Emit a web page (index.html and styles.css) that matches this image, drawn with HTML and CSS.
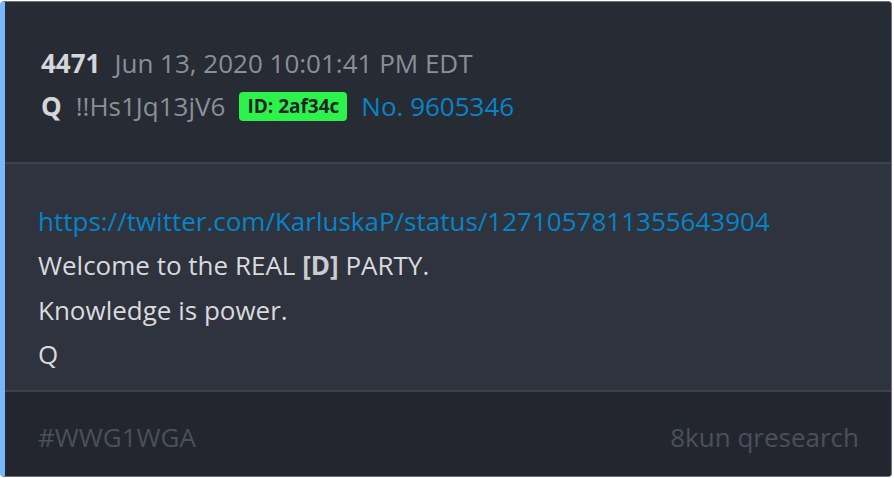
FILE: index.html
```html
<!DOCTYPE html>
<html lang="en">
<head>
    <meta charset="UTF-8">
    <title>Q Drop 4471</title>
    <link rel="stylesheet" href="styles.css">
</head>
<body>
    <div class="post-card">
        <div class="post-header">
            <div class="meta-line">
                <span class="post-num">4471</span>
                <span class="post-date">Jun 13, 2020 10:01:41 PM EDT</span>
            </div>
            <div class="meta-line">
                <span class="author">Q</span>
                <span class="trip">!!Hs1Jq13jV6</span>
                <span class="id-badge">ID: 2af34c</span>
                <a class="post-link" href="#">No. 9605346</a>
            </div>
        </div>
        <div class="post-body">
            <p><a href="#">https://twitter.com/KarluskaP/status/1271057811355643904</a></p>
            <p>Welcome to the REAL <strong>[D]</strong> PARTY.</p>
            <p>Knowledge is power.</p>
            <p>Q</p>
        </div>
        <div class="post-footer">
            <span>#WWG1WGA</span>
            <span>8kun qresearch</span>
        </div>
    </div>
</body>
</html>
```

FILE: styles.css
```css
/* General Styles */
body {
    font-family: "Open Sans", sans-serif;
    background-color: #ffffff;
    margin: 0;
    padding: 1px 2px 1px 0;
}
.post-card {
    background-color: #2e333d;
    border: 1px solid #6b707a;
    border-left: 5px solid #7ab6fa;
    border-radius: 4px;
    overflow: hidden;
    height: 476px;
    display: flex;
    flex-direction: column;
    box-sizing: border-box;
}
.post-header {
    background-color: #272b34;
    padding: 40px 36px 0;
    height: 162px;
    box-sizing: border-box;
    border-bottom: 2px solid #3d424c;
}
.meta-line {
    display: flex;
    align-items: center;
    gap: 14px;
    font-size: 26px;
    line-height: 43px;
    color: #8a8f99;
}
.post-num, .author {
    font-weight: 700;
    color: #d4d6da;
}
.id-badge {
    background-color: #2ef24c;
    color: #1f2529;
    font-weight: 700;
    font-size: 19px;
    line-height: 29px;
    padding: 0 8px;
    border-radius: 4px;
}
a {
    color: #0784c9;
    text-decoration: none;
}
.post-body {
    flex: 1;
    padding: 35px 33px 0;
    border-bottom: 2px solid #3d424c;
}
.post-body p {
    margin: 0;
    font-size: 26px;
    line-height: 44.3px;
    color: #d8dadd;
}
.post-body strong {
    color: #c9ccd0;
}
.post-footer {
    background-color: #23262e;
    height: 84px;
    box-sizing: border-box;
    display: flex;
    justify-content: space-between;
    align-items: center;
    padding: 5px 32px 0 33px;
    font-size: 26px;
    color: #4b505a;
}
```
